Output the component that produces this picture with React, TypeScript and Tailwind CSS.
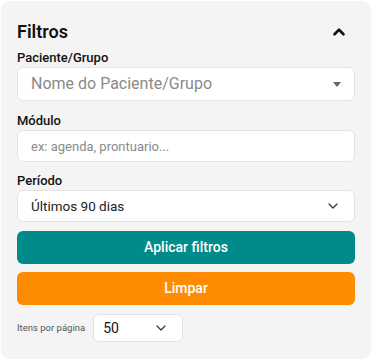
import { ChevronUp, ChevronDown } from 'lucide-react';

function Label({ children }: { children: React.ReactNode }) {
  return <label className="block text-[13px] font-medium leading-4 text-[#111] mb-px">{children}</label>;
}

export default function App() {
  return (
    <div className="w-[373px] h-[361px] bg-white p-px" style={{ fontFamily: 'Roboto, "Liberation Sans", sans-serif' }}>
      <div className="h-[358px] w-[370px] rounded-[9px] bg-[#f4f4f4] px-4 pt-[19px]">
        {/* Header */}
        <div className="flex items-center justify-between h-6 pr-[7px]">
          <h2 className="text-[18px] leading-6 font-semibold text-[#111]">Filtros</h2>
          <ChevronUp className="w-[18px] h-[18px] text-[#111]" strokeWidth={3.5} />
        </div>

        {/* Paciente/Grupo */}
        <div className="mt-[6px]">
          <Label>Paciente/Grupo</Label>
          <div className="flex items-center justify-between h-[34px] rounded-md border border-[#e4e4e4] bg-white pl-[13px] pr-[13px]">
            <span className="text-[16px] text-[#8a8a8a]">Nome do Paciente/Grupo</span>
            <svg width="8" height="5" viewBox="0 0 8 5">
              <path d="M0 0 L8 0 L4 5 Z" fill="#666" />
            </svg>
          </div>
        </div>

        {/* Módulo */}
        <div className="mt-[12px]">
          <Label>Módulo</Label>
          <input
            type="text"
            placeholder="ex: agenda, prontuario..."
            className="block w-full h-[32px] rounded-md border border-[#e4e4e4] bg-white px-[13px] text-[13px] placeholder-[#8a8a8a] outline-none"
          />
        </div>

        {/* Período */}
        <div className="mt-[11px]">
          <Label>Período</Label>
          <div className="flex items-center justify-between h-[32px] rounded-md border border-[#e4e4e4] bg-white pl-[13px] pr-[13px]">
            <span className="text-[13.5px] text-[#222]">Últimos 90 dias</span>
            <ChevronDown className="w-4 h-4 text-[#333]" strokeWidth={1.8} />
          </div>
        </div>

        {/* Actions */}
        <button className="block mt-[9px] w-full h-[33px] rounded-md bg-[#008b8b] text-white text-[14px] font-medium">
          Aplicar filtros
        </button>
        <button className="block mt-[8px] w-full h-[33px] rounded-md bg-[#ff8c00] text-white text-[14px] font-medium">
          Limpar
        </button>

        {/* Itens por página */}
        <div className="mt-[9px] flex items-center gap-[8px]">
          <span className="text-[9.5px] text-[#555]">Itens por página</span>
          <div className="flex items-center justify-between w-[90px] h-[28px] rounded-md border border-[#e4e4e4] bg-white pl-[9px] pr-[13px]">
            <span className="text-[14px] text-[#111]">50</span>
            <ChevronDown className="w-4 h-4 text-[#333]" strokeWidth={1.8} />
          </div>
        </div>
      </div>
    </div>
  );
}
